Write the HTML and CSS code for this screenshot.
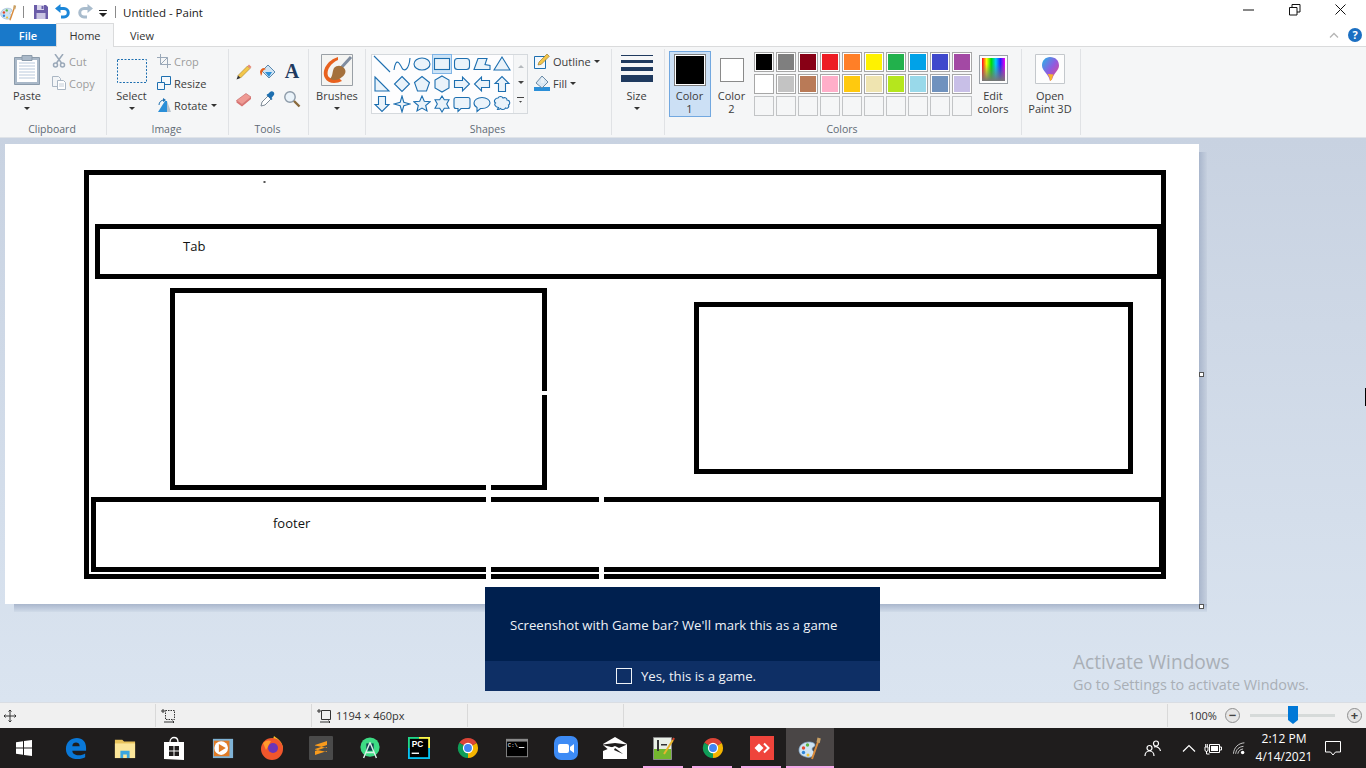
FILE: index.html
```html
<!DOCTYPE html>
<html lang="en">
<head>
<meta charset="utf-8">
<title>Untitled - Paint</title>
<link rel="stylesheet" href="styles.css">
</head>
<body>
<svg class="defs" width="0" height="0">
  <symbol id="chrome" viewBox="0 0 24 24">
    <path fill="#db4437" d="M2.500 6.400A11 11 0 0 1 21.500 6.500L12 12Z"/>
    <path fill="#0f9d58" d="M2.500 6.400A11 11 0 0 0 12 23L12 12Z"/>
    <path fill="#f4b400" d="M21.500 6.500A11 11 0 0 1 12 23L12 12Z"/>
    <circle cx="12" cy="12" r="5.600" fill="#fff"/>
    <circle cx="12" cy="12" r="4.300" fill="#4285f4"/>
  </symbol>
  <symbol id="palette" viewBox="0 0 24 24">
    <path fill="#cfe3f2" stroke="#7fa6c8" stroke-width=".7" d="M1 14c0-5 5-8 10-8 3 0 6 1 6 3 0 2-3 2-3 4s3 2 2 5c-1 3-5 4-8 3-4-1-7-3-7-7z"/>
    <circle cx="5.500" cy="12" r="1.700" fill="#e2492f"/>
    <circle cx="9.500" cy="9" r="1.700" fill="#5cb445"/>
    <circle cx="5.500" cy="16.500" r="1.700" fill="#2e86d8"/>
    <circle cx="10" cy="19" r="1.500" fill="#f3c12c"/>
    <path stroke="#d98a3a" stroke-width="2" d="M14 23 20 6"/>
    <path fill="#c9a064" d="M18.500 6 19.500 1.500 22.800 2.500 21.700 7.300Z"/>
  </symbol>
</svg>

<div class="window">
  <header class="titlebar">
    <svg class="qat-logo" viewBox="0 0 24 24"><use href="#palette"/></svg>
    <span class="qat-sep"></span>
    <svg class="qat-icon qat-save" viewBox="0 0 16 16"><path fill="#6a5ca8" d="M1 1h12l2 2v12H1z"/><path fill="#d7d3ea" d="M4 1h7v5H4z"/><path fill="#c9c4e2" d="M3.500 9h9v6h-9z"/><path fill="#6a5ca8" d="M8.500 2h2v3h-2z"/></svg>
    <svg class="qat-icon" viewBox="0 0 16 16"><path fill="none" stroke="#1c87d9" stroke-width="3" d="M3 4.500h6a4 4 0 0 1 0 8.500H6"/><path fill="#1c87d9" d="M5.500 0v9L0 4.500z"/></svg>
    <svg class="qat-icon" viewBox="0 0 16 16"><path fill="none" stroke="#a9bccd" stroke-width="3" d="M13 4.500H7a4 4 0 0 0 0 8.500h3"/><path fill="#a9bccd" d="M10.500 0v9L16 4.500z"/></svg>
    <svg class="qat-drop" viewBox="0 0 8 8"><path fill="#222" d="M0 0h8v1H0zM0 3h8L4 7z"/></svg>
    <span class="qat-sep qat-sep-2"></span>
    <span class="title-text">Untitled - Paint</span>
    <div class="win-controls">
      <svg class="win-btn" viewBox="0 0 12 12"><path stroke="#111" d="M0 6h11"/></svg>
      <svg class="win-btn" viewBox="0 0 12 12"><path fill="none" stroke="#111" d="M.5 3.500h7.500v7.500H.5zM3 3.500V.5h8V8H8"/></svg>
      <svg class="win-btn" viewBox="0 0 12 12"><path stroke="#111" d="M.5.500l10 10M10.500.500l-10 10"/></svg>
    </div>
  </header>

  <nav class="tabs">
    <span class="tab tab-file">File</span>
    <span class="tab tab-home">Home</span>
    <span class="tab tab-view">View</span>
    <div class="tabs-right">
      <svg class="collapse" viewBox="0 0 10 6"><path fill="none" stroke="#b5b5b5" stroke-width="1.300" d="M1 5.500 5 1.500l4 4"/></svg>
      <span class="help">?</span>
    </div>
  </nav>

  <section class="ribbon">
    <div class="group g-clipboard">
      <div class="group-body">
        <div class="big b-paste">
          <svg viewBox="0 0 32 32" class="big-icon"><path fill="#a9b8c8" stroke="#8b9bab" d="M3.500 3.500h25v27h-25z"/><path fill="#fff" d="M6 6h20v22H6z"/><path stroke="#b9c9dc" d="M8 9h16M8 12h16M8 15h16M8 18h16M8 21h16M8 24h16"/><path fill="#a9b8c8" stroke="#8b9bab" d="M11 1.500h10v5H11z"/></svg>
          <span class="big-label">Paste</span><i class="caret"></i>
        </div>
        <div class="small-col">
          <div class="small off"><svg viewBox="0 0 14 14"><path fill="none" stroke="#9aa8b8" stroke-width="1.500" d="M3 0l6.500 9M11 0 4.500 9"/><circle cx="3.500" cy="11" r="2" fill="none" stroke="#9aa8b8" stroke-width="1.500"/><circle cx="10.500" cy="11" r="2" fill="none" stroke="#9aa8b8" stroke-width="1.500"/></svg><span>Cut</span></div>
          <div class="small off"><svg viewBox="0 0 14 14"><path fill="#f3f5f7" stroke="#aab6c3" d="M.5.500h6l2 2v8H.5z"/><path fill="#fff" stroke="#aab6c3" d="M5.500 4.500h6l2 2v7h-8z"/><path stroke="#c5ced8" d="M7 8h5M7 10h5"/></svg><span>Copy</span></div>
        </div>
      </div>
      <div class="group-label">Clipboard</div>
    </div>

    <div class="group g-image">
      <div class="group-body">
        <div class="big b-select">
          <svg viewBox="0 0 32 32" class="big-icon"><rect x="1.500" y="5.500" width="29" height="23" fill="none" stroke="#1d6fb0" stroke-dasharray="2 1.500"/></svg>
          <span class="big-label">Select</span><i class="caret"></i>
        </div>
        <div class="small-col">
          <div class="small off"><svg viewBox="0 0 14 14"><path fill="none" stroke="#9aa8b8" d="M3.500 0v10.500H14M0 3.500h10.500V14M3.500 10.500l7-7"/></svg><span>Crop</span></div>
          <div class="small"><svg viewBox="0 0 14 14"><path fill="#f4f8fc" stroke="#1d6fb0" d="M4.500 .5h9v8h-9z"/><path fill="#f4f8fc" stroke="#1d6fb0" d="M.5 6.500h7v7h-7z"/></svg><span>Resize</span></div>
          <div class="small"><svg viewBox="0 0 14 14"><path fill="#2b8fd8" d="M8 3h2v11H1z"/><path fill="#b9c2cb" d="M10 3l4 11h-4z"/><path fill="none" stroke="#1d6fb0" d="M2 7a5 5 0 0 1 5-5"/><path fill="#1d6fb0" d="M6 0l3 2-3 2z"/></svg><span>Rotate</span><i class="caret caret-inline"></i></div>
        </div>
      </div>
      <div class="group-label">Image</div>
    </div>

    <div class="group g-tools">
      <div class="group-body tools-grid">
        <svg viewBox="0 0 18 18"><path fill="#f3c64a" stroke="#a4812a" stroke-width=".6" d="M3 12.500 12.500 3l2.500 2.500L5.500 15z"/><path fill="#e58a7a" d="M12.500 3l1.500-1.500 2.500 2.500L15 5.500z"/><path fill="#333" d="M3 12.500 1.500 16.500 5.500 15z"/></svg>
        <svg viewBox="0 0 18 18"><path fill="#cfe4f4" stroke="#5b88ad" d="M9 2 16 9l-6 6-7-7z"/><path fill="#e8611e" d="M1 9c0-2 2-4 4-4l2 1C4.500 7 3 8 3 11l-1 2z"/><path fill="#2b8fd8" d="M6 9h7l-3 5z"/></svg>
        <span class="tool-a">A</span>
        <svg viewBox="0 0 18 18"><path fill="#ef9a94" stroke="#c66d6a" stroke-width=".7" d="M1.500 10.500 11 3.500l5 3.500-9 7.500z"/><path fill="#d8716f" d="M1.500 10.500l5.500 4 9-7.500v2L7 16.500 1.500 12.500z"/></svg>
        <svg viewBox="0 0 18 18"><path fill="#fff" stroke="#7d8a96" d="M2 16l1-4 6-6 3 3-6 6z"/><path fill="#1d6fb0" d="M9 4l2-2c1-1 2.500-1 3.500 0s1 2.500 0 3.500L12.500 8l1 1-1 1-5-5 1-1z"/></svg>
        <svg viewBox="0 0 18 18"><circle cx="7" cy="7" r="5.200" fill="#eaf3fa" stroke="#8c9aa8" stroke-width="1.400"/><path stroke="#8a6a3c" stroke-width="2.400" d="M11 11l5.500 5.500"/></svg>
      </div>
      <div class="group-label">Tools</div>
    </div>

    <div class="group g-brushes">
      <div class="group-body">
        <div class="big b-wide">
          <svg viewBox="0 0 32 32" class="big-icon"><path fill="#f4f4f2" stroke="#9aa0a6" d="M.5.500h31v31H.5z"/><path fill="#e8611e" d="M17 3C7 6 0 16 4 24c3 6 11 6 17 3l-3-3c-5 2-9 1-11-2C5 16 10 9 17 6z"/><path stroke="#7f8da0" stroke-width="3" d="M20 14 30 3"/><path fill="#a4713c" d="M13 14c3-3 7-3 10 0s1 7-2 9c-3 3-8 4-12 2 3-3 2-7 4-11z"/></svg>
          <span class="big-label">Brushes</span><i class="caret"></i>
        </div>
      </div>
      <div class="group-label empty">&nbsp;</div>
    </div>

    <div class="group g-shapes">
      <div class="group-body">
        <div class="gallery">
          <div class="gallery-cells">
            <span class="cell"><svg class="shape" viewBox="0 0 18 18"><path d="M1 1l16 16"/></svg></span>
            <span class="cell"><svg class="shape" viewBox="0 0 18 18"><path class="open" d="M1 15c2-14 6-6 8-2s7 2 8-10"/></svg></span>
            <span class="cell"><svg class="shape" viewBox="0 0 18 18"><ellipse cx="9" cy="9" rx="8" ry="6"/></svg></span>
            <span class="cell cell-on"><svg class="shape" viewBox="0 0 18 18"><rect x="1.500" y="3.500" width="15" height="11"/></svg></span>
            <span class="cell"><svg class="shape" viewBox="0 0 18 18"><rect x="1.500" y="3.500" width="15" height="11" rx="3"/></svg></span>
            <span class="cell"><svg class="shape" viewBox="0 0 18 18"><path d="M5 3.500h9l-2 6 5 1v4H1z"/></svg></span>
            <span class="cell"><svg class="shape" viewBox="0 0 18 18"><path d="M9 2l8 13H1z"/></svg></span>
            <span class="cell"><svg class="shape" viewBox="0 0 18 18"><path d="M2 2l14 14H2z"/></svg></span>
            <span class="cell"><svg class="shape" viewBox="0 0 18 18"><path d="M9 1.500 16.500 9 9 16.500 1.500 9z"/></svg></span>
            <span class="cell"><svg class="shape" viewBox="0 0 18 18"><path d="M9 1.500 16.500 7.500l-3 8.500h-9l-3-8.500z"/></svg></span>
            <span class="cell"><svg class="shape" viewBox="0 0 18 18"><path d="M9 1l7 4v8l-7 4-7-4V5z"/></svg></span>
            <span class="cell"><svg class="shape" viewBox="0 0 18 18"><path d="M1.500 5.500h8V2l7 7-7 7v-3.500h-8z"/></svg></span>
            <span class="cell"><svg class="shape" viewBox="0 0 18 18"><path d="M16.500 5.500h-8V2l-7 7 7 7v-3.500h8z"/></svg></span>
            <span class="cell"><svg class="shape" viewBox="0 0 18 18"><path d="M5.500 16.500v-8H2l7-7 7 7h-3.500v8z"/></svg></span>
            <span class="cell"><svg class="shape" viewBox="0 0 18 18"><path d="M5.500 1.500v8H2l7 7 7-7h-3.500v-8z"/></svg></span>
            <span class="cell"><svg class="shape" viewBox="0 0 18 18"><path d="M9 1l1.800 6.200L17 9l-6.200 1.800L9 17l-1.800-6.200L1 9l6.200-1.800z"/></svg></span>
            <span class="cell"><svg class="shape" viewBox="0 0 18 18"><path d="M9 1l2.300 5.200 5.700.6-4.300 3.700 1.300 5.500L9 13.100 4 16l1.300-5.500L1 6.800l5.700-.6z"/></svg></span>
            <span class="cell"><svg class="shape" viewBox="0 0 18 18"><path d="M9 1l2.300 3.800H16l-2.300 4.200 2.300 4.200h-4.700L9 17l-2.300-3.800H2L4.300 9 2 4.800h4.700z"/></svg></span>
            <span class="cell"><svg class="shape" viewBox="0 0 18 18"><path d="M3 2.500h12a2 2 0 0 1 2 2v7a2 2 0 0 1-2 2H8l-3 3v-3H3a2 2 0 0 1-2-2v-7a2 2 0 0 1 2-2z"/></svg></span>
            <span class="cell"><svg class="shape" viewBox="0 0 18 18"><path d="M9 2.500c4.500 0 8 2.500 8 5.500s-3.500 5.500-8 5.500H7.500L4 16.500v-4C2 11.500 1 10 1 8c0-3 3.500-5.500 8-5.500z"/></svg></span>
            <span class="cell"><svg class="shape" viewBox="0 0 18 18"><path d="M5 3c1-2 4-2 5 0 2-1 4 0 4 2 3 0 3.500 4 1.500 5 1 2-1 4-3 3-1 2-4 2-5 .5-1 1-2 1-3 1l1-2C2 12 1 9 2.500 8 0 6 2.500 3 5 3z"/></svg></span>
          </div>
          <div class="gallery-scroll">
            <i class="sc-up"></i><i class="sc-down"></i><i class="sc-more"></i>
          </div>
        </div>
        <div class="small-col sc-outline">
          <div class="small"><svg viewBox="0 0 16 16"><path fill="#f4f8fc" stroke="#1d6fb0" d="M.5 3.500h11v12H.5z"/><path fill="#f3c64a" stroke="#8c6d22" stroke-width=".6" d="M5 9l8-8 2.300 2.300-8 8L4 12z"/></svg><span>Outline</span><i class="caret caret-inline"></i></div>
          <div class="small"><svg viewBox="0 0 16 16"><path fill="#2b8fd8" d="M0 12h16v4H0z"/><path fill="#d9e7f3" stroke="#6b8aa5" d="M8 1l6 6-6 6-6-5z"/><path fill="#e8f0f6" d="M7 3h3v5H7z"/></svg><span>Fill</span><i class="caret caret-inline"></i></div>
        </div>
      </div>
      <div class="group-label">Shapes</div>
    </div>

    <div class="group g-size">
      <div class="group-body">
        <div class="big b-wide">
          <div class="size-icon"><i class="l1"></i><i class="l2"></i><i class="l3"></i><i class="l4"></i></div>
          <span class="big-label">Size</span><i class="caret caret-size"></i>
        </div>
      </div>
      <div class="group-label empty">&nbsp;</div>
    </div>

    <div class="group g-colors">
      <div class="group-body">
        <div class="color-btn color-on">
          <span class="sw sw-1"></span>
          <span class="big-label two">Color<br>1</span>
        </div>
        <div class="color-btn">
          <span class="sw sw-2"></span>
          <span class="big-label two">Color<br>2</span>
        </div>
        <div class="palette">
          <i class="pc c01"></i><i class="pc c02"></i><i class="pc c03"></i><i class="pc c04"></i><i class="pc c05"></i><i class="pc c06"></i><i class="pc c07"></i><i class="pc c08"></i><i class="pc c09"></i><i class="pc c10"></i>
          <i class="pc c11"></i><i class="pc c12"></i><i class="pc c13"></i><i class="pc c14"></i><i class="pc c15"></i><i class="pc c16"></i><i class="pc c17"></i><i class="pc c18"></i><i class="pc c19"></i><i class="pc c20"></i>
          <i class="pc"></i><i class="pc"></i><i class="pc"></i><i class="pc"></i><i class="pc"></i><i class="pc"></i><i class="pc"></i><i class="pc"></i><i class="pc"></i><i class="pc"></i>
        </div>
        <div class="big b-edit">
          <span class="rainbow"><i></i></span>
          <span class="big-label two">Edit<br>colors</span>
        </div>
      </div>
      <div class="group-label">Colors</div>
    </div>

    <div class="group g-p3d">
      <div class="group-body">
        <div class="big b-wide b-p3d">
          <svg viewBox="0 0 30 30" class="p3d-icon">
            <defs><linearGradient id="p3d" x1="0" y1="0" x2="1" y2="1"><stop offset="0" stop-color="#21b7e8"/><stop offset=".5" stop-color="#8f5ce0"/><stop offset="1" stop-color="#f2447c"/></linearGradient></defs>
            <path fill="#fdfdfd" stroke="#c4c8cc" d="M.5.500h29v29H.5z"/>
            <path fill="url(#p3d)" d="M15 3c5.500 0 9 3.500 9 8.500 0 5-5 7-7 14l-2 1.500c-1-7-8-10-8-15.500C7 6.500 10.500 3 15 3z"/>
            <path fill="#f7b52c" d="M12.500 20c1.500 2 2.500 4 2.500 7l2-1.500c0-2 1-4 1.500-5z"/>
          </svg>
          <span class="big-label two">Open<br>Paint 3D</span>
        </div>
      </div>
      <div class="group-label empty">&nbsp;</div>
    </div>
  </section>

  <main class="workspace">
    <div class="paper">
      <svg class="drawing" viewBox="5 144 1194 460" width="1194" height="460">
        <g class="ink">
          <rect x="86.500" y="172.500" width="1077" height="404"/>
          <rect x="97.500" y="226.500" width="1062" height="50"/>
          <rect x="172.500" y="290.500" width="372" height="197"/>
          <rect x="696.500" y="304.500" width="434" height="167"/>
          <rect x="93.500" y="499.500" width="1068" height="70"/>
        </g>
        <g class="eraser">
          <rect x="486" y="485" width="5" height="5"/>
          <rect x="486" y="497" width="5" height="5"/>
          <rect x="486" y="567" width="5" height="12"/>
          <rect x="599" y="497" width="5" height="5"/>
          <rect x="599" y="567" width="5" height="12"/>
          <rect x="542" y="391" width="5" height="4"/>
        </g>
        <rect class="speck" x="263.500" y="181" width="2" height="2"/>
        <text class="note" x="183" y="251">Tab</text>
        <text class="note" x="273" y="528">footer</text>
      </svg>
      <i class="handle h-right"></i>
      <i class="handle h-corner"></i>
    </div>

    <div class="toast">
      <p class="toast-msg">Screenshot with Game bar? We'll mark this as a game</p>
      <div class="toast-foot"><i class="check"></i><span>Yes, this is a game.</span></div>
    </div>

    <div class="watermark">
      <p class="wm-1">Activate Windows</p>
      <p class="wm-2">Go to Settings to activate Windows.</p>
    </div>
    <i class="ibeam"></i>
  </main>

  <footer class="status">
    <div class="st st-1"><svg viewBox="0 0 12 12"><path fill="none" stroke="#333" d="M6 0v12M0 6h12M4.500 1.500 6 0l1.500 1.500M4.500 10.500 6 12l1.500-1.500M1.500 4.500 0 6l1.500 1.500M10.500 4.500 12 6l-1.500 1.500"/></svg></div>
    <div class="st st-2"><svg viewBox="0 0 14 14"><path fill="none" stroke="#333" d="M2 0v4M0 2h4"/><path fill="none" stroke="#333" stroke-dasharray="1.500 1" d="M4.500 1.500h9v9h-9z"/><path fill="none" stroke="#333" d="M3 13h10M11.500 11.500 13 13l-1.500 1.500"/></svg></div>
    <div class="st st-3"><svg viewBox="0 0 14 14"><path fill="none" stroke="#333" d="M2 0v4M0 2h4M4.500 1.500h9v9h-9zM3 13h10M11.500 11.500 13 13l-1.500 1.500"/></svg><span>1194 × 460px</span></div>
    <div class="st st-4"></div>
    <div class="st st-5"></div>
    <div class="zoom">
      <span class="zoom-val">100%</span>
      <span class="zbtn">−</span>
      <div class="slider"><i class="thumb"></i></div>
      <span class="zbtn">+</span>
    </div>
  </footer>

  <div class="taskbar">
    <div class="start"><svg viewBox="0 0 16 16"><path fill="#fff" d="M0 2.200 7 1.200V7.600H0zM8 1.100 16 0V7.600H8zM0 8.400H7V14.800L0 13.800zM8 8.400H16V16L8 14.900z"/></svg></div>
    <div class="slot"><svg viewBox="0 0 24 24"><path fill="#0a78d7" d="M1 13C1 5 7 1 13 1c6 0 10 4 10 11v3H8c0 3 3 5 7 5 3 0 5-1 7-2v4c-2 1-5 2-8 2C6 24 1 20 1 13zm7-3h8c0-3-2-4-4-4s-4 1-4 4z"/></svg></div>
    <div class="slot"><svg viewBox="0 0 24 24"><path fill="#e8c35c" d="M1 3h8l2 2h12v18H1z"/><path fill="#fbe69a" d="M1 7h22v16H1z"/><path fill="#3aa6e0" d="M7 15h10v8h-3v-4h-4v4H7z"/></svg></div>
    <div class="slot s24"><svg viewBox="0 0 24 24"><path fill="none" stroke="#fff" stroke-width="1.300" d="M8 6c0-6 8-6 8 0"/><path fill="#fff" d="M2 6h20v18l-20-1z"/><path fill="#1f1d1d" d="M7 10h4.500v4.500H7zM12.500 10H17v4.500h-4.500zM7 15.500h4.500V20H7zM12.500 15.500H17V20h-4.500z"/></svg></div>
    <div class="slot"><svg viewBox="0 0 24 24"><path fill="#7fb3d6" d="M1 2h22v21H1z"/><path fill="#e07b26" d="M2 4h17v17H2z"/><circle cx="10" cy="12" r="7.500" fill="#fff"/><path fill="#e07b26" d="M7.500 7.500 15 12l-7.500 4.500z"/></svg></div>
    <div class="slot s24"><svg viewBox="0 0 24 24"><path fill="#f9c025" d="M14 0c4 3 9 6 9 13H10z"/><circle cx="12" cy="13" r="11" fill="#f0562c"/><path fill="#ff9a2c" d="M3 7c3-3 6-3 8-2l-5 9z"/><circle cx="13" cy="12" r="5" fill="#6b35b8"/></svg></div>
    <div class="slot s24"><svg viewBox="0 0 24 24"><rect width="24" height="24" rx="1" fill="#4a4a4a"/><path fill="#f89a1c" d="M6 9 18 5v4L6 13zM6 15 18 11v4L6 19zM6 9.500v4l12 2.500v-4z"/></svg></div>
    <div class="slot"><svg viewBox="0 0 24 24"><circle cx="12" cy="11" r="10.500" fill="#3ddc84"/><path fill="#0d3a4a" d="M8 7h8v8H8z"/><path stroke="#d9efe6" stroke-width="1.600" fill="none" d="M12 6 5 23M12 6l7 17M8 17h8"/></svg></div>
    <div class="slot"><svg viewBox="0 0 24 24"><path fill="#21d789" d="M0 0h12v3H3v9H0z"/><path fill="#fcf84a" d="M12 0h12v12h-3V3h-9z"/><path fill="#07c3f2" d="M0 12h3v9h9v3H0zM21 12h3v12H12v-3h9z"/><rect x="2" y="2" width="20" height="20" fill="#000"/><text class="pc-text" x="4" y="11">PC</text><rect x="4" y="17" width="8" height="1.500" fill="#fff"/></svg></div>
    <div class="slot"><svg viewBox="0 0 24 24"><use href="#chrome"/></svg></div>
    <div class="slot"><svg viewBox="0 0 24 24"><rect y="2" width="24" height="20" fill="#8a8a8a"/><rect x="1" y="5" width="22" height="16" fill="#000"/><text class="cmd-text" x="2" y="11">C:\</text><rect x="14" y="11" width="6" height="1" fill="#fff"/></svg></div>
    <div class="slot s24"><svg viewBox="0 0 24 24"><rect width="24" height="24" rx="7" fill="#3d8bf5"/><rect x="4" y="8" width="11" height="9" rx="2" fill="#fff"/><path fill="#fff" d="M16 11l4-3v9l-4-3z"/></svg></div>
    <div class="slot s24"><svg viewBox="0 0 24 24"><path fill="#fff" d="M0 8 12 1l12 7v15H0z"/><path fill="#1f1d1d" d="M0 8.500 12 7l12 1.500L16 12l-4-2-12 5z"/><path fill="#fff" d="M0 9l12 3-4 4z"/><path fill="#1f1d1d" d="M12 12l8 6-9-4z"/></svg></div>
    <div class="slot s24"><svg viewBox="0 0 24 24"><path fill="#e9efe6" stroke="#8a8a8a" d="M1.500 1.500h18v22h-18z"/><path fill="#74b72e" d="M2 13h17v10H2z"/><path fill="#333" d="M5 4h2v11H5zM9 8h6v1.500H9z"/><path stroke="#e8b52e" stroke-width="2" d="M12 18 21 4"/><path stroke="#d6432c" stroke-width="2" d="M21 4l1-2"/></svg></div>
    <div class="slot"><svg viewBox="0 0 24 24"><use href="#chrome"/></svg></div>
    <div class="slot s24"><svg viewBox="0 0 24 24"><rect width="24" height="24" fill="#ef443b"/><path fill="#fff" d="M9 7.500 13.500 12 9 16.500 4.500 12z"/><path fill="none" stroke="#fff" stroke-width="2" d="M14 7.500 18.500 12 14 16.500"/></svg></div>
    <div class="slot slot-on s24"><svg viewBox="0 0 24 24"><use href="#palette"/></svg></div>

    <div class="tray">
      <svg class="t-people" viewBox="0 0 18 16"><g fill="none" stroke="#fff" stroke-width="1.200"><circle cx="5.500" cy="8" r="2.500"/><path d="M1 16c0-3 2-5 4.500-5s4.500 2 4.500 5"/><circle cx="12" cy="3.500" r="2.500"/><path d="M10 7c3-1 6 1 6.500 4"/></g></svg>
      <svg class="t-chev" viewBox="0 0 14 8"><path fill="none" stroke="#fff" stroke-width="1.200" d="M1 7.500 7 1.500l6 6"/></svg>
      <svg class="t-batt" viewBox="0 0 18 14"><path fill="none" stroke="#fff" d="M5.500 3.500h10v8h-10zM15.500 6h2v3h-2M1 6h3v3a1 1 0 0 1-3 0zM1.700 3v3M3.300 3v3M2.500 10v3h3"/><path fill="#fff" d="M7 5h7v5H7z"/></svg>
      <svg class="t-wifi" viewBox="0 0 16 14"><g fill="none" stroke="#ddd" stroke-width="1"><path d="M.5 13C1 6 6 1 13 .5"/><path d="M3 13c.5-5 4-8 9-8.500"/><path d="M5.500 13c.5-3 2.500-5 6-5.500"/></g><circle cx="11" cy="11.500" r="2" fill="#fff"/></svg>
      <div class="clock"><span>2:12 PM</span><span>4/14/2021</span></div>
      <svg class="t-note" viewBox="0 0 16 15"><path fill="none" stroke="#fff" d="M.5.500h15v10.500h-5L8 14l-2.500-3H.5z"/></svg>
    </div>
    <i class="pink p1"></i><i class="pink p2"></i><i class="pink p3"></i><i class="pink p4"></i>
  </div>
</div>
</body>
</html>
```

FILE: styles.css
```css
* { box-sizing: border-box; }
html, body { margin: 0; padding: 0; }
body { width: 1366px; height: 768px; overflow: hidden; background: #fff; font-family: "Open Sans", "Noto Sans", sans-serif; font-size: 11px; color: #3b3b3b; }
p { margin: 0; }
i { display: block; font-style: normal; }
.defs { position: absolute; }
.window { width: 1366px; height: 768px; display: flex; flex-direction: column; position: relative; }

/* title bar */
.titlebar { height: 24px; display: flex; align-items: center; background: #fff; flex: none; }
.qat-logo { width: 17px; height: 17px; flex: none; }
.qat-sep { width: 1px; height: 12px; background: #8a8a8a; margin-left: 6px; flex: none; }
.qat-icon { width: 16px; height: 16px; margin-left: 6px; flex: none; }
.qat-save { margin-left: 9px; }
.qat-drop { width: 8px; height: 8px; margin-left: 6px; margin-top: 3px; flex: none; }
.qat-sep-2 { margin-left: 8px; }
.title-text { margin-left: 7px; font-size: 11.500px; color: #222; }
.win-controls { margin-left: auto; display: flex; align-items: center; gap: 34px; padding-right: 19px; margin-top: -4px; }
.win-btn { width: 12px; height: 12px; display: block; }

/* tabs */
.tabs { height: 22px; display: flex; align-items: stretch; flex: none; position: relative; background: #fff; }
.tab { display: flex; align-items: center; justify-content: center; font-size: 11px; color: #333; }
.tab-file { width: 56px; background: #1979ca; color: #fff; font-weight: 600; }
.tab-home { width: 58px; background: #f5f6f7; border: 1px solid #dadbdc; border-bottom: 0; margin-top: -1px; z-index: 1; height: 24px; }
.tab-view { width: 56px; }
.tabs-right { margin-left: auto; display: flex; align-items: center; gap: 9px; padding-right: 4px; }
.collapse { width: 10px; height: 6px; }
.help { width: 14px; height: 14px; border-radius: 50%; background: #1b6fc2; color: #fff; font-size: 11px; font-weight: 700; line-height: 14px; text-align: center; }

/* ribbon */
.ribbon { height: 92px; flex: none; display: flex; background: #f5f6f7; border-top: 1px solid #dadbdc; border-bottom: 1px solid #dfe3e8; padding-top: 2px; }
.group { display: flex; flex-direction: column; height: 86px; border-right: 1px solid #e0e2e5; flex: none; }
.group-body { height: 73px; display: flex; flex: none; }
.group-label { height: 13px; line-height: 14px; text-align: center; color: #5f6a75; font-size: 10.500px; padding-right: 2px; }
.g-clipboard { width: 107px; }
.g-image { width: 122px; }
.g-tools { width: 80px; }
.g-brushes { width: 57px; }
.g-shapes { width: 246px; }
.g-size { width: 53px; }
.g-colors { width: 357px; }
.g-p3d { width: 59px; }

.big { display: flex; flex-direction: column; align-items: center; padding-top: 5px; flex: none; }
.big-icon { width: 32px; height: 32px; display: block; flex: none; }
.big-label { margin-top: 3px; line-height: 14px; text-align: center; white-space: nowrap; }
.big-label.two { line-height: 13px; margin-top: 2px; }
.caret { width: 0; height: 0; border: 3px solid transparent; border-top-color: #333; border-bottom-width: 0; margin-top: 4px; }
.caret-inline { margin: 1px 0 0 3px; }
.b-paste { width: 40px; margin-left: 7px; }
.b-select { width: 40px; margin-left: 4px; padding-left: 1px; }
.b-wide { width: 100%; }
.b-p3d { padding-right: 2px; }

.small-col { display: flex; flex-direction: column; padding-top: 1px; }
.small { height: 22px; display: flex; align-items: center; white-space: nowrap; }
.small svg { width: 14px; height: 14px; margin-right: 3px; flex: none; }
.off { color: #9c9c9c; }
.g-clipboard .small-col { margin-left: 5px; }
.g-image .small-col { margin-left: 6px; }
.tools-grid { display: grid; grid-template-columns: repeat(3, 24px); grid-template-rows: repeat(2, 27px); padding: 9px 0 0 3px; }
.tools-grid svg { width: 18px; height: 18px; margin: auto; display: block; }
.tool-a { font-family: "Liberation Serif", serif; font-weight: 700; font-size: 20px; color: #1f3a5f; line-height: 27px; text-align: center; }

/* shapes gallery */
.gallery { margin: 5px 0 0 5px; width: 157px; height: 60px; border: 1px solid #d5d9dd; background: #fdfdfe; display: flex; flex: none; }
.gallery-cells { width: 141px; height: 59px; display: grid; grid-template-columns: repeat(7, 20px); grid-template-rows: 20px 20px 19px; margin-top: -1px; }
.cell { display: flex; align-items: center; justify-content: center; border: 1px solid transparent; }
.cell-on { background: #cde4f7; border-color: #7fb4e6; }
.shape { width: 18px; height: 18px; display: block; fill: #eaf3fa; stroke: #1d6fb0; stroke-width: 1.100; }
.shape .open { fill: none; }
.gallery-scroll { flex: 1; border-left: 1px solid #e3e6e9; background: #f5f6f7; display: flex; flex-direction: column; align-items: center; justify-content: space-around; padding: 4px 0; }
.sc-up { width: 0; height: 0; border: 3px solid transparent; border-bottom-color: #b5b9bd; border-top-width: 0; }
.sc-down { width: 0; height: 0; border: 3px solid transparent; border-top-color: #444; border-bottom-width: 0; }
.sc-more { width: 7px; height: 6px; border-top: 1px solid #444; background: linear-gradient(#444, #444) no-repeat center 3px / 7px 3px; clip-path: polygon(0 0, 100% 0, 100% 35%, 50% 100%, 0 35%); }
.sc-outline { margin-left: 6px; }
.sc-outline .small svg { width: 16px; height: 16px; margin-right: 3px; }

/* size */
.b-wide .size-icon { margin-right: 3px; }
.size-icon { width: 32px; height: 32px; padding-top: 1px; display: flex; flex-direction: column; flex: none; }
.size-icon i { background: #1f3a5f; flex: none; }
.l1 { height: 1px; }
.l2 { height: 3px; margin-top: 4px; }
.l3 { height: 4px; margin-top: 4px; }
.l4 { height: 7px; margin-top: 4px; }
.g-size .big-label, .caret-size { margin-right: 3px; }

/* colours */
.g-colors .group-body { padding-left: 4px; }
.color-btn { width: 42px; height: 66px; margin-top: 2px; display: flex; flex-direction: column; align-items: center; border: 1px solid transparent; flex: none; }
.color-btn .big-label { margin: 3px 1px 0 0; }
.color-on { background: #cce0f5; border-color: #72a8e0; }
.sw { display: block; flex: none; }
.sw-1 { width: 32px; height: 32px; margin-top: 2px; background: #000; border: 1px solid #7f7f7f; box-shadow: inset 0 0 0 1px #fff; }
.sw-2 { width: 24px; height: 24px; margin: 6px 0 4px; background: #fff; border: 1px solid #8a8a8a; }
.palette { display: grid; grid-template-columns: repeat(10, 20px); grid-auto-rows: 20px; gap: 2px; margin: 3px 0 0 1px; flex: none; height: 64px; }
.pc { border: 1px solid #a7a7a7; background: #f5f6f7; box-shadow: inset 0 0 0 1px #fff; }
.pc:nth-child(n+21) { border-color: #c2c4c6; box-shadow: none; }
.c01 { background: #000; } .c02 { background: #7f7f7f; } .c03 { background: #880015; } .c04 { background: #ed1c24; } .c05 { background: #ff7f27; }
.c06 { background: #fff200; } .c07 { background: #22b14c; } .c08 { background: #00a2e8; } .c09 { background: #3f48cc; } .c10 { background: #a349a4; }
.c11 { background: #fff; } .c12 { background: #c3c3c3; } .c13 { background: #b97a57; } .c14 { background: #ffaec9; } .c15 { background: #ffc90e; }
.c16 { background: #efe4b0; } .c17 { background: #b5e61d; } .c18 { background: #99d9ea; } .c19 { background: #7092be; } .c20 { background: #c8bfe7; }
.b-edit { width: 42px; padding-top: 6px; }
.rainbow { display: block; width: 29px; height: 29px; padding: 2px; background: #fdfdfd; border: 1px solid #9aa0a6; flex: none; margin-bottom: 3px; }
.rainbow i { width: 100%; height: 100%; background: linear-gradient(transparent 25%, #777 100%), linear-gradient(90deg, #f02, #ff0 20%, #0d0 40%, #0cf 60%, #22f 80%, #e0e); }
.p3d-icon { width: 30px; height: 30px; display: block; margin-bottom: 3px; flex: none; }

/* workspace */
.workspace { flex: 1; position: relative; background: linear-gradient(#c8d2e1, #dae4f0); padding: 6px 0 0 5px; min-height: 0; }
.paper { width: 1194px; height: 460px; background: #fff; position: relative; }
.paper::after { content: ""; position: absolute; left: 9px; top: 100%; width: 1193px; height: 8px; background: linear-gradient(#a9b6cc, #d0dbe9); }
.paper::before { content: ""; position: absolute; left: 100%; top: 8px; width: 8px; height: 452px; background: linear-gradient(90deg, #a9b6cc, #c6d0df); }
.drawing { display: block; }
.ink rect { fill: none; stroke: #000; stroke-width: 5; }
.eraser rect { fill: #fff; }
.speck { fill: #555; }
.note { font-family: "Open Sans", "Noto Sans", sans-serif; font-size: 13px; fill: #111; }
.handle { position: absolute; width: 5px; height: 5px; background: #fff; border: 1px solid #555; z-index: 1; }
.h-right { left: 1194px; top: 228px; }
.h-corner { left: 1194px; top: 460px; }
.toast { position: absolute; left: 485px; top: 449px; width: 395px; height: 104px; background: #00204f; color: #eef2f7; z-index: 2; display: flex; flex-direction: column; font-size: 13.200px; }
.toast-msg { height: 74px; padding: 28px 0 0 25px; line-height: 20px; white-space: nowrap; }
.toast-foot { height: 30px; background: #0e2f65; display: flex; align-items: center; padding-left: 131px; gap: 9px; }
.check { width: 16px; height: 16px; border: 1.500px solid #eef2f7; }
.watermark { position: absolute; left: 1073px; top: 512px; color: #a9afb6; white-space: nowrap; }
.wm-1 { font-size: 19.100px; line-height: 24px; }
.wm-2 { font-size: 14.400px; line-height: 22px; }
.ibeam { position: absolute; left: 1365px; top: 250px; width: 1px; height: 18px; background: #000; }

/* status bar */
.status { height: 26px; flex: none; background: #f0f0f0; border-top: 1px solid #d9dde3; display: flex; font-size: 11px; color: #333; }
.st { width: 156px; flex: none; display: flex; align-items: center; border-right: 1px solid #d9d9d9; margin: 1px 0 1px; padding-left: 4px; }
.st svg { width: 12px; height: 12px; flex: none; }
.st-2 { padding-left: 5px; }
.st-2 svg, .st-3 svg { width: 14px; height: 14px; }
.st-3 { padding-left: 5px; gap: 5px; }
.st-5 { width: 544px; }
.zoom { flex: 1; display: flex; align-items: center; padding-left: 21px; }
.zoom-val { width: 36px; }
.zbtn { width: 15px; height: 15px; border-radius: 50%; border: 1px solid #8f8f8f; background: #e6e6e6; line-height: 12px; text-align: center; font-size: 13px; font-weight: 700; color: #444; }
.slider { width: 85px; height: 3px; margin: 0 12px 0 10px; background: #d6dad9; position: relative; }
.thumb { position: absolute; left: 38px; top: -8px; width: 10px; height: 18px; background: #0078d7; clip-path: polygon(0 0, 100% 0, 100% 78%, 50% 100%, 0 78%); }

/* taskbar */
.taskbar { height: 40px; flex: none; background: #1f1d1d; display: flex; align-items: stretch; position: relative; }
.start { width: 51px; display: flex; align-items: center; padding-left: 16px; flex: none; }
.start svg { width: 16px; height: 16px; }
.slot { width: 49px; display: flex; align-items: center; justify-content: center; flex: none; }
.slot svg { width: 22px; height: 22px; display: block; }
.slot.s24 svg { width: 24px; height: 24px; }
.slot-on { background: #4a4646; width: 48px; }
.pc-text { font-family: "Liberation Sans", sans-serif; font-size: 9px; font-weight: 700; fill: #fff; }
.cmd-text { font-family: "Liberation Mono", monospace; font-size: 6px; fill: #fff; }
.tray { margin-left: auto; display: flex; align-items: center; color: #fff; font-size: 12px; flex: none; }
.t-people { width: 18px; height: 16px; margin-right: 20px; }
.t-chev { width: 14px; height: 8px; margin-right: 8px; }
.t-batt { width: 18px; height: 14px; margin-right: 11px; }
.t-wifi { width: 14px; height: 13px; margin-right: 9px; }
.clock { width: 56px; display: flex; flex-direction: column; align-items: center; line-height: 18px; white-space: nowrap; margin-right: 13px; }
.t-note { width: 16px; height: 15px; margin-right: 25px; }
.pink { position: absolute; bottom: 0; height: 2px; background: #f4a8e8; }
.p1 { left: 643px; width: 40px; }
.p2 { left: 692px; width: 40px; }
.p3 { left: 741px; width: 40px; }
.p4 { left: 786px; width: 48px; }
```
